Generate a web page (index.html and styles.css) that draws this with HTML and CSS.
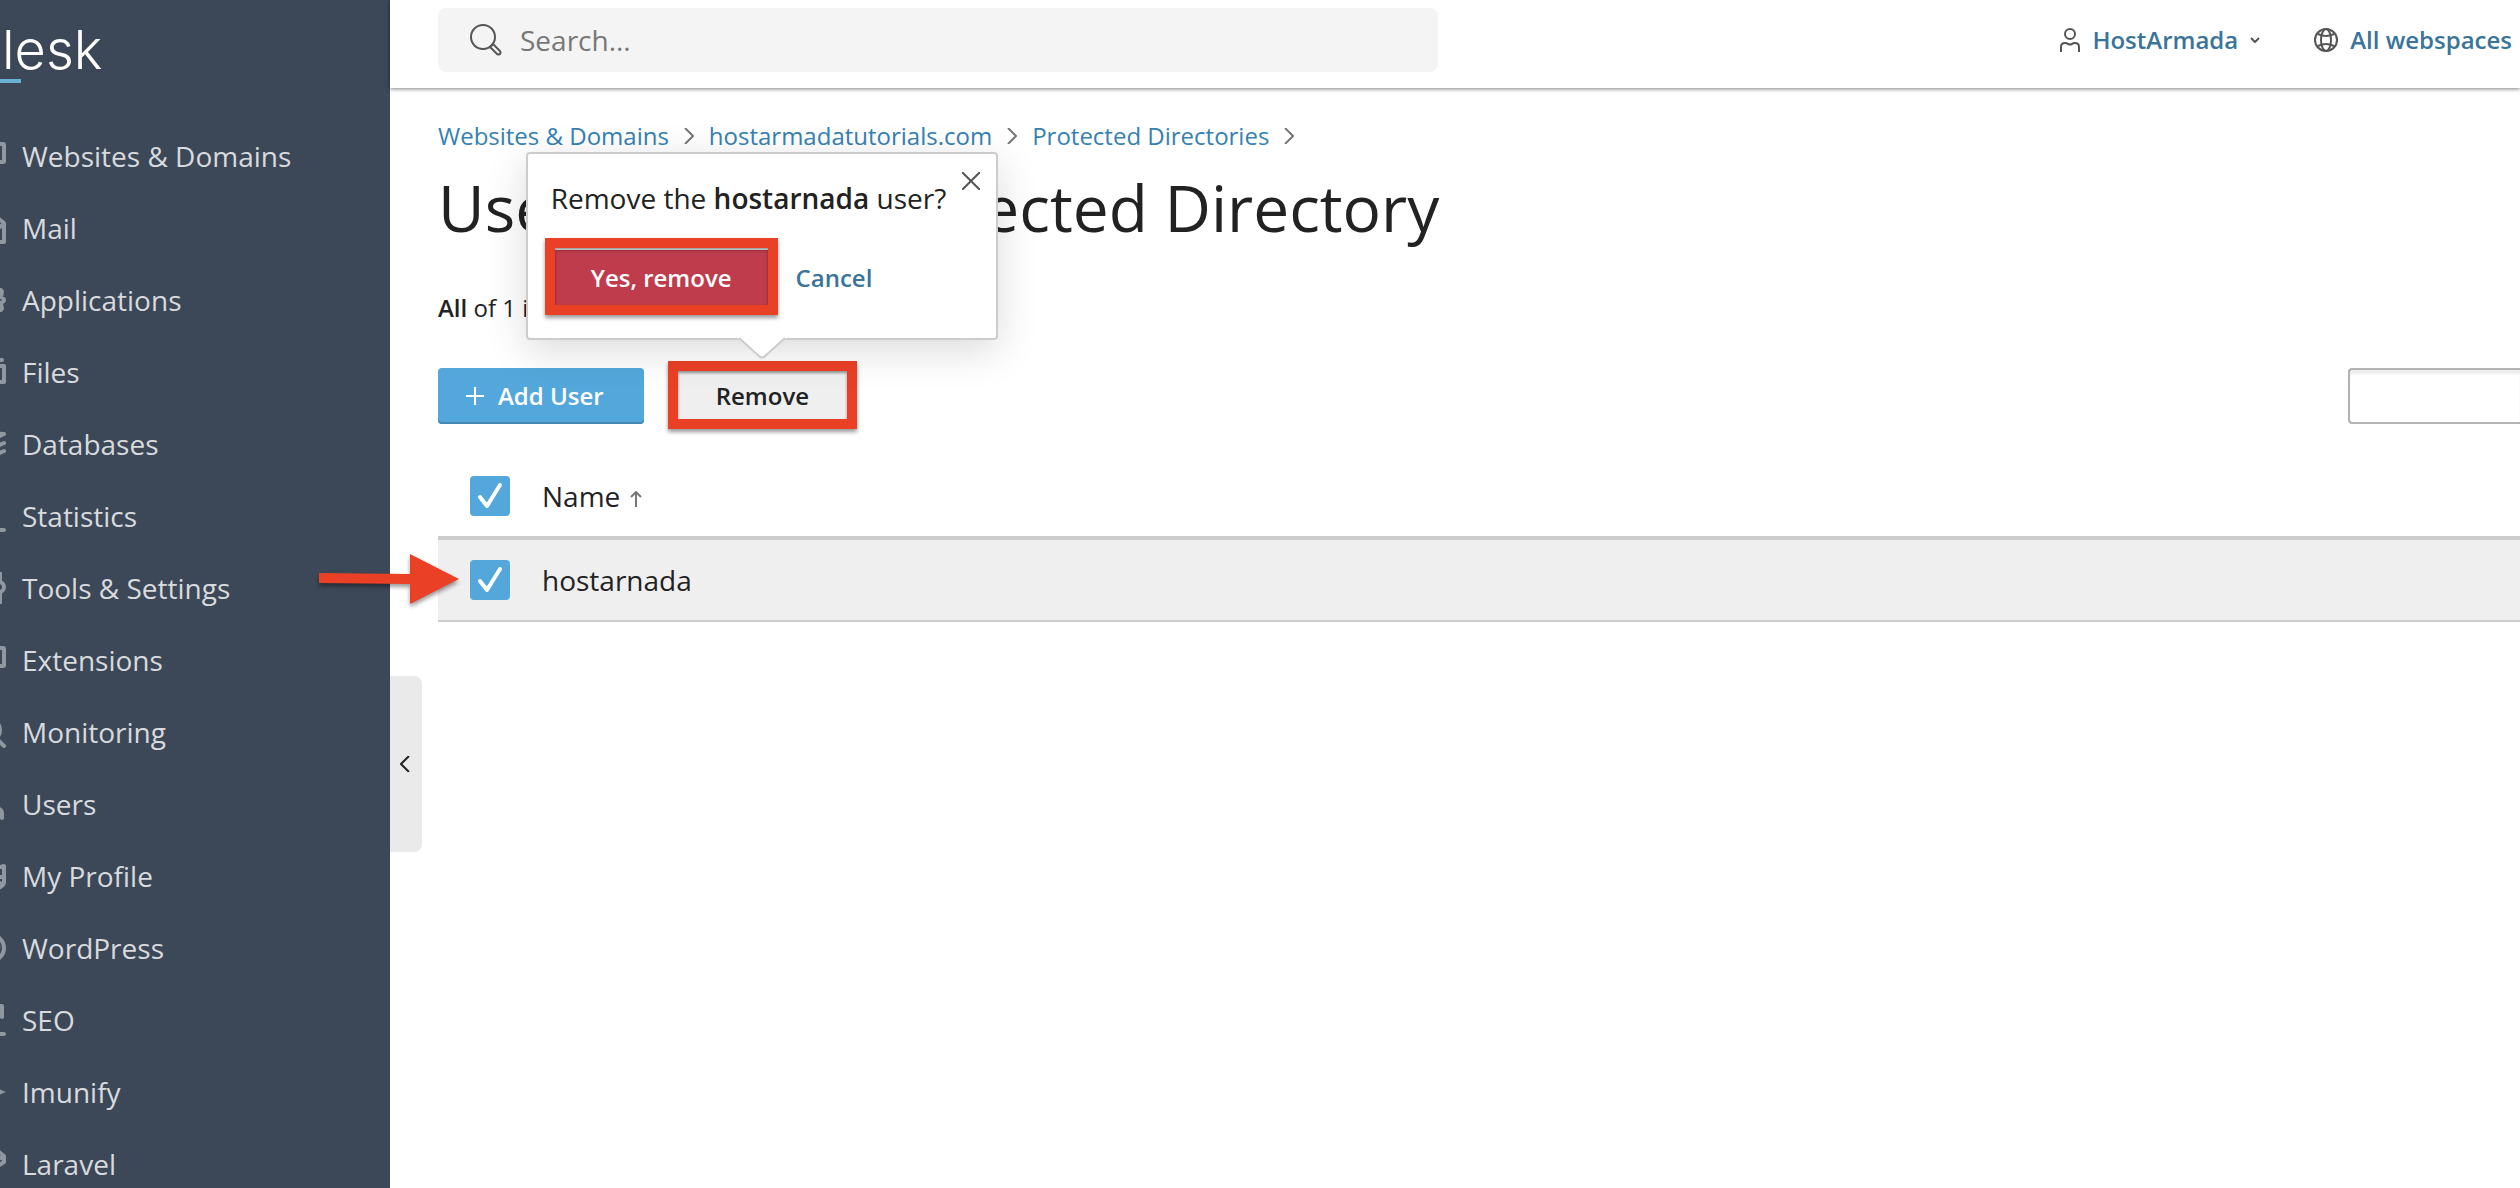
FILE: index.html
```html
<!DOCTYPE html>
<html lang="en">
<head>
<meta charset="utf-8">
<title>Users of Your Protected Directory</title>
<link rel="stylesheet" href="styles.css">
</head>
<body>
<div class="app">
  <aside class="sidebar">
    <a class="logo" href="#">lesk</a>
    <nav>
      <ul class="menu">
        <li><a href="#"><svg viewBox="0 0 32 32"><rect x="2" y="4" width="28" height="18" rx="1"/></svg>Websites &amp; Domains</a></li>
        <li><a href="#"><svg viewBox="0 0 32 32"><path d="M2 30V12L16 3l9 4 5 4v19zM2 13l14 9 14-10"/></svg>Mail</a></li>
        <li><a href="#"><svg viewBox="0 0 32 32"><path d="M16 6h8q4-1 4 2t-2 5q4 1 4 3t-4 3q2 2 2 5t-4 2h-8z"/></svg>Applications</a></li>
        <li><a href="#"><svg viewBox="0 0 32 32"><path d="M2 10h28v16H2zM14 4h14"/></svg>Files</a></li>
        <li><a href="#"><svg viewBox="0 0 32 32"><path d="M2 7l14-2 14 1-14 6zM2 14l14 7 14-6M2 22l14 7 14-6"/></svg>Databases</a></li>
        <li><a href="#"><svg viewBox="0 0 32 32"><path d="M2 30h28M8 22v-8M16 22V6"/></svg>Statistics</a></li>
        <li><a href="#"><svg viewBox="0 0 32 32"><path d="M26 1v8M26 21v10M8 1v30"/><circle cx="25" cy="15" r="5"/></svg>Tools &amp; Settings</a></li>
        <li><a href="#"><svg viewBox="0 0 32 32"><rect x="10" y="4" width="20" height="18" rx="1"/></svg>Extensions</a></li>
        <li><a href="#"><svg viewBox="0 0 32 32"><circle cx="15" cy="14" r="11"/><path d="M23 23l7 7"/></svg>Monitoring</a></li>
        <li><a href="#"><svg viewBox="0 0 32 32"><circle cx="16" cy="8" r="6"/><path d="M4 30v-4q0-6 8-6h8q8 0 8 6v4"/></svg>Users</a></li>
        <li><a href="#"><svg viewBox="0 0 32 32"><path d="M2 8h20l8-2v16q0 4-6 6H8M20 17h10M25 23h1"/></svg>My Profile</a></li>
        <li><a href="#"><svg viewBox="0 0 32 32"><circle cx="17" cy="16" r="13"/><path d="M22 8q4 6 1 12l-3 5"/></svg>WordPress</a></li>
        <li><a href="#"><svg viewBox="0 0 32 32"><path d="M18 14V2h10v11M4 30h26"/></svg>SEO</a></li>
        <li><a href="#"><svg class="solid" viewBox="0 0 32 32"><path d="M24 4q1 9 3 10l5 2-5 2q-2 1-3 10-2-9-4-10l-5-2 5-2q2-1 4-10z"/></svg>Imunify</a></li>
        <li><a href="#"><svg viewBox="0 0 32 32"><path d="M18 7l7-3 5 4v6l-12 8M20 12l10-3"/></svg>Laravel</a></li>
      </ul>
    </nav>
  </aside>

  <div class="page">
    <header class="topbar">
      <label class="search">
        <svg class="search-icon" viewBox="0 0 32 32"><circle cx="13" cy="13" r="12"/><path d="M20 23l3-3 7 7q1 2 0 3t-3 0z"/></svg>
        <input type="search" placeholder="Search..." aria-label="Search">
      </label>
      <div class="account">
        <a href="#">
          <svg class="user-icon" viewBox="0 0 20 24"><circle cx="10" cy="6" r="5"/><path d="M1 24v-5q0-4 4-4 2 0 3 1 2 1 4 0 1-1 3-1 4 0 4 4v5"/></svg>
          <span>HostArmada</span>
          <svg class="chevron-down" viewBox="0 0 10 6"><path d="M1 1l4 4 4-4"/></svg>
        </a>
        <a href="#">
          <svg class="globe-icon" viewBox="0 0 24 24"><circle cx="12" cy="12" r="11"/><ellipse cx="12" cy="12" rx="5" ry="11"/><path d="M4 6q8 4 16 0M4 18q8-4 16 0"/></svg>
          <span>All webspaces</span>
        </a>
      </div>
    </header>

    <main class="content">
      <nav class="breadcrumb" aria-label="Breadcrumb">
        <a href="#">Websites &amp; Domains</a>
        <svg viewBox="0 0 10 16"><path d="M1 0l8 8-8 8"/></svg>
        <a href="#">hostarmadatutorials.com</a>
        <svg viewBox="0 0 10 16"><path d="M1 0l8 8-8 8"/></svg>
        <a href="#">Protected Directories</a>
        <svg viewBox="0 0 10 16"><path d="M1 0l8 8-8 8"/></svg>
      </nav>
      <h1>Users of Your Protected Directory</h1>
      <p class="count"><b>All</b> of 1 items</p>

      <div class="toolbar">
        <button class="btn btn-primary" type="button"><svg viewBox="0 0 18 18"><path d="M9 0v18M0 9h18"/></svg>Add User</button>
        <div class="anchor">
          <button class="btn btn-default" type="button">Remove</button>
          <span class="mark mark-remove"></span>
          <div class="popover" role="dialog" aria-label="Confirm removal">
            <p>Remove the <b>hostarnada</b> user?</p>
            <button class="close" type="button" aria-label="Close"><svg viewBox="0 0 18 18"><path d="M0 0l18 18M18 0L0 18"/></svg></button>
            <div class="actions">
              <div class="anchor">
                <button class="btn btn-danger" type="button">Yes, remove</button>
                <span class="mark mark-confirm"></span>
              </div>
              <button class="btn btn-link" type="button">Cancel</button>
            </div>
            <svg class="tip" viewBox="0 0 48 22"><path d="M0 0h48v2h-1L26 20q-2 2-4 0L1 2H0z" class="tip-fill"/><path d="M1 1l21 19q2 1 4 0L47 1" class="tip-line"/></svg>
          </div>
        </div>
        <input class="filter" type="text" aria-label="Filter users">
      </div>

      <table class="list">
        <thead>
          <tr>
            <th class="select"><input type="checkbox" checked aria-label="Select all"></th>
            <th>Name <svg class="sort" viewBox="0 0 12 16"><path d="M6 16V1M1 6l5-5 5 5"/></svg></th>
          </tr>
        </thead>
        <tbody>
          <tr>
            <td class="select"><input type="checkbox" checked aria-label="Select hostarnada"></td>
            <td>hostarnada</td>
          </tr>
        </tbody>
      </table>
    </main>

    <button class="collapse" type="button" aria-label="Collapse sidebar"><svg viewBox="0 0 10 16"><path d="M9 0L1 8l8 8"/></svg></button>
    <svg class="pointer" viewBox="0 0 140 50"><path d="M0 19l91 1V0l49 25-49 25V30L0 29z"/></svg>
  </div>
</div>
</body>
</html>
```
FILE: styles.css
```css
* { box-sizing: border-box; }

body {
  margin: 0;
  background: #fff;
  color: #222;
  font: 28px/40px "Open Sans", "Noto Sans", sans-serif;
}

a { color: #3681b1; text-decoration: none; }
b { font-weight: 600; }
p { margin: 0; }
button, input { font: inherit; color: inherit; }
svg { display: block; flex: none; fill: none; stroke: #555; stroke-width: 2; }

.app {
  display: grid;
  grid-template-columns: 390px 1fr;
  height: 100vh;
  overflow: hidden;
}

/* Sidebar */
.sidebar { background: #3c4858; overflow: hidden; }

.logo {
  display: block;
  height: 120px;
  padding: 18px 0 0 2px;
  background: linear-gradient(#67b1d2, #67b1d2) 0 79px / 21px 4px no-repeat;
  color: #fff;
  font: 300 54px/64px Inter, sans-serif;
}

.menu { margin: 0 0 0 -26px; padding: 0; list-style: none; }
.menu a {
  display: flex;
  align-items: center;
  gap: 16px;
  height: 72px;
  color: #d8dadd;
}
.menu svg { width: 32px; height: 32px; stroke: #9097a0; stroke-width: 4; stroke-linecap: round; stroke-linejoin: round; }
.menu .solid { fill: #9097a0; stroke: none; }

/* Top bar */
.page { position: relative; min-width: 0; }

.topbar {
  display: flex;
  align-items: center;
  justify-content: space-between;
  height: 88px;
  padding: 0 8px 8px 48px;
  box-shadow: 0 1px 4px rgba(0, 0, 0, .5);
}

.search {
  display: flex;
  align-items: center;
  gap: 18px;
  width: 1000px;
  height: 64px;
  padding: 0 32px;
  border-radius: 8px;
  background: #f4f4f4;
}
.search input { flex: 1; padding: 0; border: 0; outline: 0; background: none; }
.search input::placeholder { color: #777; opacity: 1; }
.search-icon { width: 32px; height: 32px; }

.account { display: flex; gap: 54px; font-size: 24px; font-weight: 600; }
.account a { display: flex; align-items: center; gap: 12px; color: #3a7599; }
.user-icon { width: 20px; height: 24px; }
.globe-icon { width: 24px; height: 24px; }
.chevron-down { width: 10px; height: 6px; }

/* Content */
.content { padding: 30px 0 0 48px; }

.breadcrumb { display: flex; align-items: center; gap: 15px; font-size: 24px; line-height: 36px; }
.breadcrumb svg { width: 10px; height: 16px; stroke: #777; }

h1 { margin: 14px 0 0; font-size: 64px; font-weight: 400; line-height: 80px; }
.count { margin-top: 42px; font-size: 24px; line-height: 36px; }

.toolbar { display: flex; gap: 28px; margin: 42px 0 32px; }
.anchor { position: relative; }

.btn {
  display: flex;
  align-items: center;
  height: 56px;
  padding: 0 40px;
  border: 0;
  border-radius: 4px;
  font-size: 24px;
  font-weight: 600;
}
.btn-primary { gap: 14px; padding: 0 40px 0 28px; background: #53a7da; box-shadow: inset 0 -2px #4488b2; color: #fff; }
.btn-primary svg { width: 18px; height: 18px; stroke: #fff; }
.btn-default { padding: 0 44px; background: #efefef; }
.btn-danger { background: #bf3c4c; color: #fff; }
.btn-link { padding: 0 24px; background: none; color: #3a7599; }

.filter {
  width: 172px;
  height: 56px;
  margin-left: auto;
  border: 2px solid #b3b3b3;
  border-right: 0;
  border-radius: 4px 0 0 4px;
  box-shadow: inset 0 4px 2px #eee;
}

/* Confirmation popover */
.popover {
  position: absolute;
  bottom: calc(100% + 28px);
  left: -146px;
  width: 472px;
  padding: 24px 23px 32px;
  border: 2px solid #ccc;
  border-radius: 4px;
  background: #fff;
  box-shadow: 0 10px 40px rgba(0, 0, 0, .15);
  white-space: nowrap;
}
.actions { display: flex; margin-top: 32px; }
.close { position: absolute; top: 18px; right: 16px; padding: 0; border: 0; background: none; }
.close svg { width: 18px; height: 18px; }
.tip { position: absolute; top: calc(100% - 1px); left: 210px; width: 48px; height: 22px; }
.tip-fill { fill: #fff; stroke: none; }
.tip-line { stroke: #ccc; }

/* Red callouts */
.mark {
  position: absolute;
  border: 10px solid #ea4025;
  box-shadow: 0 3px 4px rgba(0, 0, 0, .4), inset 0 2px 3px rgba(0, 0, 0, .4);
  pointer-events: none;
}
.mark-remove { inset: -7px -4px -5px; }
.mark-confirm { inset: -12px -6px -9px; }
.pointer {
  position: absolute;
  top: 554px;
  left: -71px;
  width: 140px;
  height: 50px;
  overflow: visible;
  filter: drop-shadow(0 3px 2px rgba(0, 0, 0, .4));
}
.pointer path { fill: #ea4025; stroke: none; }

/* List */
.list { width: 100%; border-collapse: separate; border-spacing: 0; }
.list th, .list td { height: 80px; padding: 0; font-weight: 400; text-align: left; }
.list th { height: 84px; border-bottom: 4px solid #ccc; }
.list td { height: 82px; border-bottom: 2px solid #ccc; background: #efefef; }
.list .select { width: 104px; padding-left: 32px; }
.sort { display: inline-block; width: 12px; height: 16px; margin-left: 2px; stroke: #777; }

input[type="checkbox"] {
  display: block;
  width: 40px;
  height: 40px;
  margin: 0;
  border-radius: 4px;
  appearance: none;
  background: #53a7da url("data:image/svg+xml,%3Csvg xmlns='http://www.w3.org/2000/svg' viewBox='0 0 40 40'%3E%3Cpath d='M10 23l7 9 13-21' fill='none' stroke='%23fff' stroke-width='4' stroke-linecap='round' stroke-linejoin='round'/%3E%3C/svg%3E") 0 -2px;
}

.collapse {
  position: absolute;
  top: 676px;
  left: 0;
  width: 32px;
  height: 176px;
  padding: 0 0 0 10px;
  border: 0;
  border-radius: 0 8px 8px 0;
  background: #eaeaea;
}
.collapse svg { width: 10px; height: 16px; stroke: #222; }
```
